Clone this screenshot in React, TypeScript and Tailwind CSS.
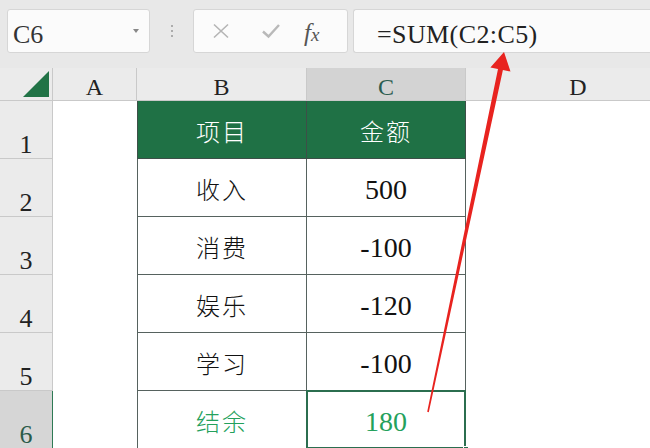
import React from "react";

const serif = { fontFamily: '"Liberation Serif", "Noto Sans CJK SC", serif' };

type Row = { n: number; item: string; amount: string; total?: boolean };

const rows: Row[] = [
  { n: 2, item: "收入", amount: "500" },
  { n: 3, item: "消费", amount: "-100" },
  { n: 4, item: "娱乐", amount: "-120" },
  { n: 5, item: "学习", amount: "-100" },
  { n: 6, item: "结余", amount: "180", total: true },
];

function RowHead({ n, active }: { n: number; active?: boolean }) {
  return (
    <div
      className={`flex items-end justify-center pb-0 border-b border-r text-[26px] leading-none font-['Liberation_Serif',serif] ${
        active
          ? "bg-[#d6d6d6] border-b-[#c4c4c4] border-r-[#2f7a55] text-[#2a5b49]"
          : "bg-[#ebebeb] border-[#c9c9c9] text-[#222]"
      }`}
    >
      {n}
    </div>
  );
}

function ColHead({ label, active }: { label: string; active?: boolean }) {
  return (
    <div
      className={`flex items-end justify-center pb-[1px] border-r border-b border-[#c9c9c9] text-[24px] leading-none font-['Liberation_Serif',serif] ${
        active ? "bg-[#d3d3d3] text-[#2c5d50]" : "bg-[#ebebeb] text-[#222]"
      }`}
    >
      {label}
    </div>
  );
}

export default function App() {
  return (
    <div className="relative w-[650px] h-[448px] overflow-hidden bg-white" style={serif}>
      {/* formula bar */}
      <div className="h-[68px] bg-[#e8e8e8] flex items-start pt-[9px] pl-[7px]">
        <div className="w-[143px] h-[44px] bg-[#fbfbfb] border border-[#d6d6d6] rounded-[3px] flex items-center justify-between pl-[5px] pr-[10px]">
          <span className="pt-[8px] text-[26px] leading-none text-[#333] font-['Liberation_Serif',serif]">C6</span>
          <span className="w-0 h-0 border-l-[3px] border-r-[3px] border-t-[4px] border-l-transparent border-r-transparent border-t-[#888]" />
        </div>
        <div className="w-[43px] h-[44px] flex flex-col items-center justify-center gap-[3px]">
          <span className="w-[2px] h-[2px] rounded-full bg-[#999]" />
          <span className="w-[2px] h-[2px] rounded-full bg-[#999]" />
          <span className="w-[2px] h-[2px] rounded-full bg-[#999]" />
        </div>
        <div className="w-[155px] h-[44px] bg-[#fbfbfb] border border-[#d6d6d6] rounded-[3px] flex items-center">
          <svg width="20" height="16" viewBox="0 0 20 16" className="ml-[17px]">
            <path d="M3 1.5 L17 14.5 M17 1.5 L3 14.5" stroke="#b5b5b5" strokeWidth="1.6" fill="none" />
          </svg>
          <svg width="20" height="16" viewBox="0 0 20 16" className="ml-[30px]">
            <path d="M2 8.5 L7.5 13.5 L18 2" stroke="#b9b9b9" strokeWidth="2.4" fill="none" />
          </svg>
          <span className="ml-[23px] pt-[2px] text-[25px] italic leading-none text-[#555] font-['Liberation_Serif',serif]">
            f<span className="text-[19px]">x</span>
          </span>
        </div>
        <div className="ml-[5px] flex-1 h-[44px] bg-[#fbfbfb] border border-r-0 border-[#d6d6d6] rounded-l-[3px] flex items-center pl-[23px]">
          <span className="pt-[8px] text-[26px] leading-none text-[#222] tracking-[0.4px] font-['Liberation_Serif',serif]">
            =SUM(C2:C5)
          </span>
        </div>
      </div>

      {/* sheet grid */}
      <div className="grid grid-cols-[53px_84px_170px_159px_224px] grid-rows-[33px_repeat(6,58px)]">
        <div className="bg-[#ebebeb] border-r border-b border-[#c9c9c9] flex items-end justify-end pr-[3px] pb-[3px]">
          <div className="w-0 h-0 border-b-[26px] border-l-[26px] border-b-[#217346] border-l-transparent" />
        </div>
        <ColHead label="A" />
        <ColHead label="B" />
        <ColHead label="C" active />
        <div className="flex items-end justify-center pb-[1px] border-b border-[#c9c9c9] bg-[#ebebeb] text-[24px] leading-none text-[#222] font-['Liberation_Serif',serif]">
          D
        </div>

        {/* row 1 — header */}
        <RowHead n={1} />
        <div className="bg-white" />
        <div className="bg-[#1f7145] border-l border-r border-b border-[#3d4f48] flex items-center justify-center pt-[3px] text-white text-[24px] tracking-[2px] font-['Noto_Sans_CJK_SC',sans-serif] font-light">
          项目
        </div>
        <div className="bg-[#1f7145] border-r border-b border-[#3d4f48] flex items-center justify-center pt-[3px] text-white text-[24px] tracking-[2px] font-['Noto_Sans_CJK_SC',sans-serif] font-light">
          金额
        </div>
        <div className="bg-white" />

        {rows.map((r) => (
          <React.Fragment key={r.n}>
            <RowHead n={r.n} active={r.total} />
            <div className="bg-white" />
            <div
              className={`bg-white border-l border-r border-b border-[#56625e] flex items-center justify-center pt-[3px] text-[24px] tracking-[2px] font-['Noto_Sans_CJK_SC',sans-serif] font-light ${
                r.total ? "text-[#24a15c]" : "text-[#111]"
              }`}
            >
              {r.item}
            </div>
            <div
              className={`relative bg-white border-r border-b border-[#56625e] flex items-center justify-center pt-[4px] text-[28px] font-['Liberation_Serif',serif] ${
                r.total ? "text-[#24a15c]" : "text-[#111]"
              }`}
            >
              {r.amount}
              {r.total && (
                <>
                  <div className="absolute -left-px -top-px -right-px -bottom-px border-2 border-[#2b6e4f]" />
                  <div className="absolute -right-[4px] -bottom-[4px] w-[6px] h-[6px] bg-[#2b6e4f] border border-white" />
                </>
              )}
            </div>
            <div className="bg-white" />
          </React.Fragment>
        ))}
      </div>

      {/* red annotation arrow */}
      <svg className="absolute left-0 top-0 pointer-events-none" width="650" height="448" viewBox="0 0 650 448">
        <polygon
          points="504,52 510.5,71.6 502.9,70.1 428.8,412.2 427.2,411.8 498,69.1 490.4,67.6"
          fill="#e8231f"
        />
      </svg>
    </div>
  );
}
